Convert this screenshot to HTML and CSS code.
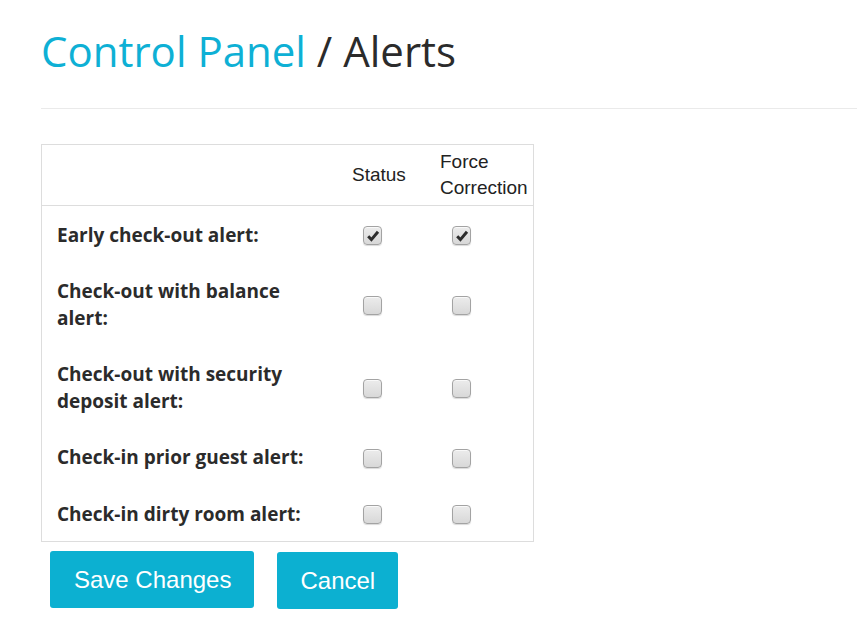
FILE: index.html
```html
<!DOCTYPE html>
<html lang="en">
<head>
<meta charset="utf-8">
<title>Control Panel / Alerts</title>
<link rel="stylesheet" href="styles.css">
</head>
<body>
<div class="page">
  <h1 class="title"><span class="crumb">Control Panel</span> / Alerts</h1>
  <hr class="rule">
  <div class="alerts">
    <div class="cell head"></div>
    <div class="cell head col">Status</div>
    <div class="cell head col">Force Correction</div>

    <div class="cell label">Early check-out alert:</div>
    <div class="cell box"><span class="cb checked"><svg viewBox="0 0 16 16" width="16" height="16"><path d="M3.2 8.3 L6.4 11.6 L13 3.8" fill="none" stroke="#2d2d2d" stroke-width="3"/></svg></span></div>
    <div class="cell box box-last"><span class="cb checked"><svg viewBox="0 0 16 16" width="16" height="16"><path d="M3.2 8.3 L6.4 11.6 L13 3.8" fill="none" stroke="#2d2d2d" stroke-width="3"/></svg></span></div>

    <div class="cell label">Check-out with balance alert:</div>
    <div class="cell box"><span class="cb"></span></div>
    <div class="cell box box-last"><span class="cb"></span></div>

    <div class="cell label">Check-out with security deposit alert:</div>
    <div class="cell box"><span class="cb"></span></div>
    <div class="cell box box-last"><span class="cb"></span></div>

    <div class="cell label">Check-in prior guest alert:</div>
    <div class="cell box"><span class="cb"></span></div>
    <div class="cell box box-last"><span class="cb"></span></div>

    <div class="cell label">Check-in dirty room alert:</div>
    <div class="cell box"><span class="cb"></span></div>
    <div class="cell box box-last"><span class="cb"></span></div>
  </div>
  <div class="actions">
    <button class="btn">Save Changes</button>
    <button class="btn btn-cancel">Cancel</button>
  </div>
</div>
</body>
</html>
```
FILE: styles.css
```css
html, body {
  margin: 0;
  padding: 0;
  background: #fff;
}
.page {
  padding-left: 41px;
  font-family: "Open Sans", "Liberation Sans", sans-serif;
  color: #2b2b2b;
}
.title {
  margin: 0;
  padding-top: 28px;
  font-family: "Open Sans", sans-serif;
  font-weight: 400;
  font-size: 42px;
  line-height: 46px;
  color: #2b2b2b;
}
.crumb {
  color: #0eb0d5;
}
.rule {
  margin: 34px 0 0 0;
  border: 0;
  border-top: 1px solid #eaeaea;
  height: 0;
}
.alerts {
  margin-top: 35px;
  width: 491px;
  border: 1px solid #dddddd;
  display: grid;
  grid-template-columns: 296px 88px 1fr;
}
.cell {
  display: flex;
  align-items: center;
}
.head {
  height: 52px;
  padding: 4px 0;
  border-bottom: 1px solid #dddddd;
  font-family: "Liberation Sans", Arial, sans-serif;
  font-size: 19px;
  line-height: 26px;
  color: #222;
}
.col {
  padding-left: 14px;
}
.label {
  padding: 15.5px 20px 13.75px 15px;
  font-family: "Open Sans", sans-serif;
  font-weight: 700;
  font-size: 19px;
  line-height: 27px;
  color: #2b2b2b;
}
.box {
  padding-left: 25px;
}
.box-last {
  padding-left: 26px;
}
.cb {
  box-sizing: border-box;
  width: 19px;
  height: 19px;
  margin-top: 3px;
  border: 1px solid #a3a3a3;
  border-radius: 4px;
  background: linear-gradient(#ececec, #d8d8d8);
  box-shadow: inset 0 1px 0 rgba(255,255,255,.7), 0 1px 1px rgba(0,0,0,.15);
  display: flex;
  align-items: center;
  justify-content: center;
}
.actions {
  display: flex;
  align-items: flex-start;
  gap: 23px;
  margin-top: 9px;
  padding-left: 9px;
}
.btn {
  border: 0;
  border-radius: 3px;
  background: #0cb0d1;
  color: #fff;
  font-family: "Liberation Sans", Arial, sans-serif;
  font-size: 24px;
  line-height: 27px;
  padding: 15px 23px 15px 24px;
}
.btn-cancel {
  margin-top: 1px;
  padding: 15px 23px;
}
```
